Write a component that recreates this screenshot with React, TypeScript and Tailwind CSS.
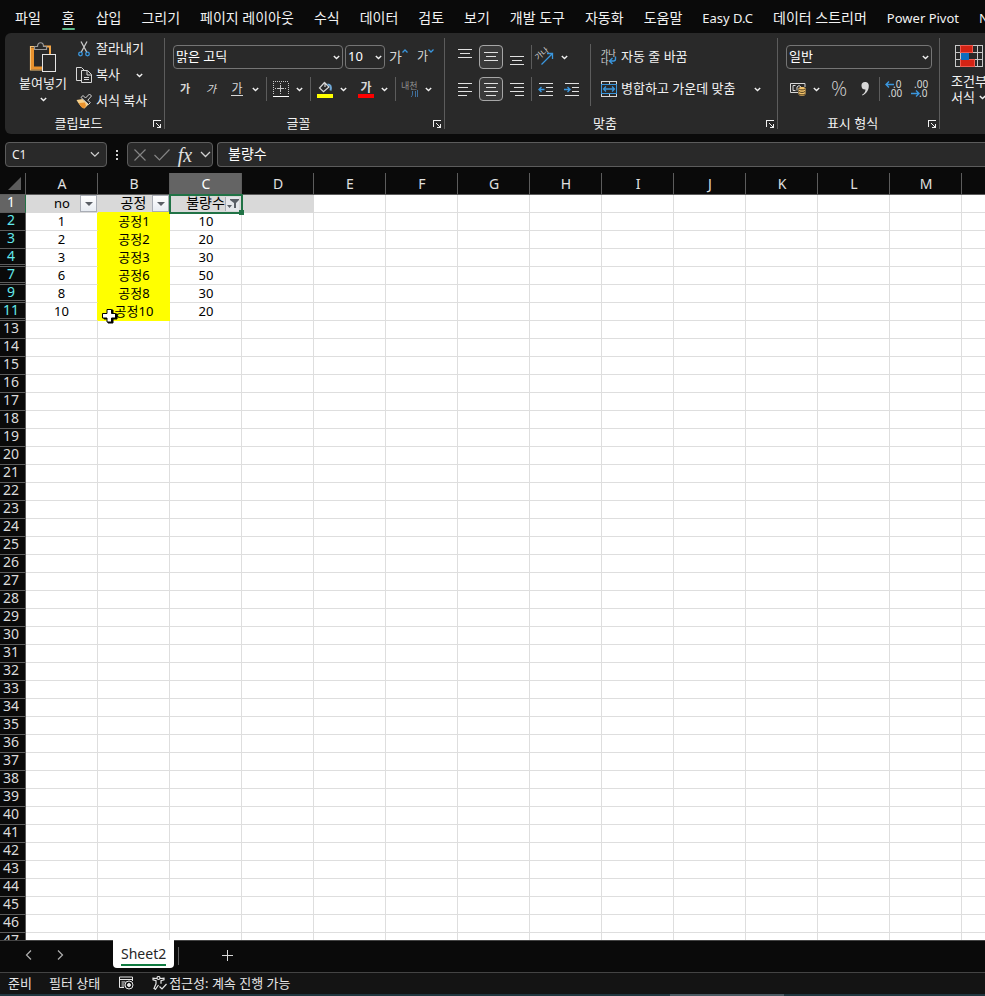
import type { ReactNode } from "react";

const tabs = [
  "파일", "홈", "삽입", "그리기", "페이지 레이아웃", "수식", "데이터", "검토", "보기",
  "개발 도구", "자동화", "도움말", "Easy D.C", "데이터 스트리머", "Power Pivot", "N",
];

const columns = ["A", "B", "C", "D", "E", "F", "G", "H", "I", "J", "K", "L", "M", "N"];

const records: { row: number; no: string; process: string; defects: string }[] = [
  { row: 2, no: "1", process: "공정1", defects: "10" },
  { row: 3, no: "2", process: "공정2", defects: "20" },
  { row: 4, no: "3", process: "공정3", defects: "30" },
  { row: 7, no: "6", process: "공정6", defects: "50" },
  { row: 9, no: "8", process: "공정8", defects: "30" },
  { row: 11, no: "10", process: "공정10", defects: "20" },
];

const emptyRows = Array.from({ length: 35 }, (_, i) => i + 13);

function Chevron({ wide = false }: { wide?: boolean }) {
  return wide ? (
    <svg width="11" height="7" viewBox="0 0 11 7" fill="none" stroke="#d0d0d0" strokeWidth="1.3">
      <path d="M1 1l4.5 4.5L10 1" />
    </svg>
  ) : (
    <svg width="7" height="5" viewBox="0 0 7 5" fill="none" stroke="#f0f0f0" strokeWidth="1.4">
      <path d="M.8 1l2.7 2.5L6.2 1" />
    </svg>
  );
}

function IconButton({ label, boxed = false, children }: { label: string; boxed?: boolean; children: ReactNode }) {
  return (
    <button
      type="button"
      aria-label={label}
      className={
        boxed
          ? "flex size-6 shrink-0 items-center justify-center rounded border border-[#a6a6a6] bg-[#3a3a3a]"
          : "flex size-6 shrink-0 items-center justify-center"
      }
    >
      {children}
    </button>
  );
}

function More({ label }: { label: string }) {
  return (
    <button type="button" aria-label={label} className="flex h-6 w-3 shrink-0 items-center justify-center">
      <Chevron />
    </button>
  );
}

function Split({ label, children }: { label: string; children: ReactNode }) {
  return (
    <div className="flex">
      <IconButton label={label}>{children}</IconButton>
      <More label={label + " 옵션"} />
    </div>
  );
}

function Divider() {
  return <div className="h-6 w-px shrink-0 bg-[#5c5c5c]" />;
}

function Launcher({ label }: { label: string }) {
  return (
    <button type="button" aria-label={label} className="self-end">
      <svg width="10" height="10" viewBox="0 0 10 10" fill="none" stroke="#f0f0f0" shapeRendering="crispEdges">
        <path d="M1.5 8V1.5H9" />
        <path d="M4 4l4 4" shapeRendering="auto" />
        <path d="M8.5 4.5v4h-4" />
      </svg>
    </button>
  );
}

function Group({ title, width, children }: { title: string; width: string; children: ReactNode }) {
  return (
    <section className={"flex shrink-0 flex-col border-r border-[#5c5c5c] " + width}>
      <div className="min-h-0 flex-1">{children}</div>
      <div className="flex h-4 items-start pr-0.5">
        <h2 className="flex-1 text-center leading-5">{title}</h2>
        <Launcher label={title + " 설정"} />
      </div>
    </section>
  );
}

function Dropdown({ label, value, width, inset }: { label: string; value: string; width: string; inset: string }) {
  return (
    <div className={"grid h-6 shrink-0 items-center " + width}>
      <select
        aria-label={label}
        className={
          "h-6 w-full appearance-none rounded border border-[#757575] bg-[#292929] text-white [grid-area:1/1] " + inset
        }
      >
        <option>{value}</option>
      </select>
      <span className="pointer-events-none mr-[3px] justify-self-end [grid-area:1/1]">
        <Chevron />
      </span>
    </div>
  );
}

function Lines({ d }: { d: string }) {
  return (
    <svg width="16" height="16" viewBox="0 0 16 16" fill="none" stroke="#e0e0e0" shapeRendering="crispEdges">
      <path d={d} />
    </svg>
  );
}

function Indent({ right = false }: { right?: boolean }) {
  return (
    <svg width="16" height="16" viewBox="0 0 16 16" fill="none" stroke="#e0e0e0">
      <path d="M1 2.5h14M8 6.5h7M8 10.5h7M1 14.5h14" shapeRendering="crispEdges" />
      {right ? (
        <path d="M0 8.5h6M3.5 6l2.5 2.5L3.5 11" stroke="#3a96dd" strokeWidth="1.4" />
      ) : (
        <path d="M6.5 8.5H1M3.5 6L1 8.5 3.5 11" stroke="#3a96dd" strokeWidth="1.4" />
      )}
    </svg>
  );
}

function Decimals({ more = false }: { more?: boolean }) {
  return (
    <svg width="18" height="18" viewBox="0 0 18 18" fill="none" className="overflow-visible text-[10px]">
      {more ? (
        <>
          <text x="3" y="8" fill="#d8d8d8">.00</text>
          <text x="8" y="17" fill="#d8d8d8">.0</text>
          <path d="M0 13.5h8M5 10.5l3 3-3 3" stroke="#3a96dd" strokeWidth="1.4" />
        </>
      ) : (
        <>
          <text x="8" y="8" fill="#d8d8d8">.0</text>
          <text x="3" y="17" fill="#d8d8d8">.00</text>
          <path d="M9 4.5H1M4 1.5l-3 3 3 3" stroke="#3a96dd" strokeWidth="1.4" />
        </>
      )}
    </svg>
  );
}

function PasteIcon() {
  return (
    <svg width="28" height="31" viewBox="0 0 28 31" fill="none">
      <path d="M7 4.5H1.5V28H13" stroke="#f8c476" strokeWidth="1.2" />
      <path d="M3.5 5.5v20.5h9.5" stroke="#e8912d" strokeWidth="3" />
      <path d="M14 4.5h7V12" stroke="#f3a648" strokeWidth="2" />
      <path d="M5.5 7.5v-3h3c0-5 6-5 6 0h3v3z" fill="#292929" stroke="#9a9a9a" strokeWidth="1.2" />
      <path d="M13.5 12.5h13v17h-13z" fill="#292929" stroke="#e6e6e6" shapeRendering="crispEdges" />
    </svg>
  );
}

function CutIcon() {
  return (
    <svg width="16" height="16" viewBox="0 0 16 16" fill="none" strokeWidth="1.3">
      <path d="M5 .5l5.7 10.5M11 .5L5.3 11" stroke="#c8c8c8" />
      <circle cx="4.5" cy="13" r="1.8" stroke="#3a96dd" />
      <circle cx="11.5" cy="13" r="1.8" stroke="#3a96dd" />
    </svg>
  );
}

function CopyIcon() {
  return (
    <svg width="16" height="16" viewBox="0 0 16 16" fill="none" stroke="#d8d8d8">
      <path d="M5 13.5H.5V.5h5l2.5 2.5" />
      <path d="M5.5 3.5h6l4 4v8h-10z" fill="#292929" />
      <path d="M11 3.5v4.5h4.5M8 10.5h5M8 12.5h5" />
    </svg>
  );
}

function BrushIcon() {
  return (
    <svg width="16" height="16" viewBox="0 0 16 16" fill="none">
      <path d="M.5 7l6-1 6 5.5-4 4q-4-1-8-8.5z" fill="#f6d08a" />
      <path d="M3 10l6-.5 1 3.5-2 2.5q-3-.5-5-5.5z" fill="#e8912d" />
      <path d="M5 4.5l7.5 7 1.8-1.8-2.5-2.5L15.5 3 13.5 1 9.5 5 7 2.5z" fill="#292929" stroke="#d8d8d8" />
    </svg>
  );
}

function BorderIcon() {
  return (
    <svg width="16" height="16" viewBox="0 0 16 16" fill="none" stroke="#c8c8c8" shapeRendering="crispEdges">
      <path d="M0 .5h16M.5 2v12M15.5 2v12M7.5 2v3M7.5 10v4M2 7.5h3M10 7.5h4" strokeDasharray="1 1" />
      <path d="M5 7.5h5M7.5 5v5" />
      <path d="M0 15.5h16" stroke="#fff" />
    </svg>
  );
}

function FillIcon() {
  return (
    <svg width="16" height="17" viewBox="0 0 16 17" fill="none">
      <path d="M7.5 1.5L2.5 7l4 3.8L12 6 8 2v4" stroke="#d8d8d8" strokeWidth="1.2" />
      <path d="M10.5 3.5c3 0 4 2 3 6" stroke="#6fa8d6" strokeWidth="2" />
      <path d="M0 13h16v4H0z" fill="#ff0" />
    </svg>
  );
}

function OrientationIcon() {
  return (
    <svg width="18" height="18" viewBox="0 0 18 18" fill="none" className="overflow-visible text-[8px]">
      <text x="-1" y="9" fill="#d8d8d8" transform="rotate(-40 5 8)">가나</text>
      <path d="M4.5 16.5L15 6M10 5.5H15.5V11" stroke="#3a96dd" strokeWidth="1.3" />
    </svg>
  );
}

function WrapIcon() {
  return (
    <svg width="16" height="16" viewBox="0 0 16 16" fill="none" className="overflow-visible text-[8px]">
      <text x="0" y="7" fill="#e0e0e0">가나</text>
      <text x="0" y="15" fill="#e0e0e0">다</text>
      <path d="M14.5 7.5v2.500q0 2-2 2H9M11.5 9L8.5 12l3 3" stroke="#3a96dd" strokeWidth="1.4" />
    </svg>
  );
}

function MergeIcon() {
  return (
    <svg width="16" height="16" viewBox="0 0 16 16" fill="none">
      <path d="M.5.5h15v15H.5zM8 .5V4M8 12v3.5" stroke="#d8d8d8" shapeRendering="crispEdges" />
      <path d="M.5 3.5h15v9H.5z" fill="#292929" stroke="#3a96dd" shapeRendering="crispEdges" />
      <path d="M3 8h10M5 5.5L2.5 8 5 10.5M11 5.5L13.5 8 11 10.5" stroke="#3a96dd" strokeWidth="1.3" />
    </svg>
  );
}

function CurrencyIcon() {
  return (
    <svg width="17" height="16" viewBox="0 0 17 16" fill="none">
      <path d="M8 11.5H.5v-9h14.5V6" stroke="#d8d8d8" />
      <path d="M5.5 4.5H3v5h2.5M7 9.5V6q2-3 4 0" stroke="#d8d8d8" />
      <path d="M8.5 7.5v5.5c0 2.5 7 2.5 7 0V7.5c0-2-7-2-7 0z" fill="#f3c26b" />
      <path d="M9 8c1 1.2 5 1.2 6 0M9 10.5c1 1.2 5 1.2 6 0M9 13c1 1.2 5 1.2 6 0" stroke="#4a3a1c" />
    </svg>
  );
}

function ConditionalIcon() {
  return (
    <svg width="28" height="22" viewBox="0 0 28 22" fill="none" shapeRendering="crispEdges">
      <path d="M.5.5h27v21H.5zM.5 7.5h27M.5 14.5h27M5.5 0v22M22.5 0v22" stroke="#c8c8c8" />
      <path d="M5.5.5h12v7h-12zM5.5 14.5h14v7h-14z" fill="#d42314" stroke="#f05a50" />
      <path d="M5.5 8h8v6.5h-8z" fill="#0f6cbd" />
    </svg>
  );
}

function FilterButton({ label }: { label: string }) {
  return (
    <button
      type="button"
      aria-label={label}
      className="absolute top-0 right-0 flex size-[17px] items-center justify-center border border-[#a9adb5] bg-linear-to-b from-white to-[#e8ecf2]"
    >
      <svg width="8" height="4" viewBox="0 0 8 4">
        <path d="M0 0h8L4 4z" fill="#5a5f66" />
      </svg>
    </button>
  );
}

function Ribbon() {
  return (
    <div className="ml-[5px] flex h-[101px] shrink-0 overflow-hidden rounded-l-md bg-[#292929] py-[5px] text-[13px] text-[#f2f2f2]">
      <Group title="클립보드" width="w-[160px]">
        <div className="flex pl-3">
          <button type="button" className="flex w-[52px] flex-col items-center pt-1">
            <PasteIcon />
            <span className="leading-5 whitespace-nowrap">붙여넣기</span>
            <span className="mt-1">
              <Chevron />
            </span>
          </button>
          <div className="-mt-0.5 ml-[7px] flex flex-col">
            <button type="button" className="flex h-[26px] items-center gap-1">
              <CutIcon />
              잘라내기
            </button>
            <div className="flex h-[26px] items-center">
              <button type="button" className="flex items-center gap-1">
                <CopyIcon />
                복사
              </button>
              <button type="button" aria-label="복사 옵션" className="ml-3 p-1">
                <Chevron />
              </button>
            </div>
            <button type="button" className="flex h-[26px] items-center gap-1">
              <BrushIcon />
              서식 복사
            </button>
          </div>
        </div>
      </Group>

      <Group title="글꼴" width="w-[280px]">
        <div className="flex flex-col gap-2 pt-[7px] pl-2">
          <div className="flex items-center">
            <Dropdown label="글꼴 이름" value="맑은 고딕" width="w-[170px]" inset="pl-0.5" />
            <div className="ml-0.5 flex">
              <Dropdown label="글꼴 크기" value="10" width="w-10" inset="pl-0.5" />
            </div>
            <button type="button" aria-label="글꼴 크기 크게" className="ml-1 flex h-6 w-[18px] text-[#d8d8d8]">
              <span className="text-[14px] leading-6">가</span>
              <svg width="6" height="4" viewBox="0 0 6 4" fill="none" stroke="#3a96dd" strokeWidth="1.3" className="mt-1 shrink-0">
                <path d="M.5 3.5L3 1l2.5 2.5" />
              </svg>
            </button>
            <button type="button" aria-label="글꼴 크기 작게" className="ml-2.5 flex h-6 w-[18px] text-[#d8d8d8]">
              <span className="text-[12px] leading-6">가</span>
              <svg width="6" height="4" viewBox="0 0 6 4" fill="none" stroke="#3a96dd" strokeWidth="1.3" className="mt-1 shrink-0">
                <path d="M.5.5L3 3 5.5.5" />
              </svg>
            </button>
          </div>
          <div className="flex items-center text-[12px] text-[#d8d8d8]">
            <div className="flex gap-0.5">
              <IconButton label="굵게">
                <span className="text-[11px] font-bold">가</span>
              </IconButton>
              <IconButton label="기울임꼴">
                <span className="text-[11px] italic">가</span>
              </IconButton>
              <Split label="밑줄">
                <span className="border-b border-[#d8d8d8] leading-[13px]">가</span>
              </Split>
            </div>
            <div className="mr-0.5 ml-[5px]"><Divider /></div>
            <Split label="테두리"><BorderIcon /></Split>
            <div className="mr-0.5 ml-[5px]"><Divider /></div>
            <Split label="채우기 색"><FillIcon /></Split>
            <div className="ml-[5px]">
              <Split label="글꼴 색">
                <span className="w-4 border-b-4 border-[#ff0000] text-center leading-[13px] font-bold">가</span>
              </Split>
            </div>
            <div className="mr-0.5 ml-[5px]"><Divider /></div>
            <Split label="윗주 필드">
              <svg width="18" height="18" viewBox="0 0 18 18" fill="none" className="overflow-visible text-[9px]">
                <text x="0" y="9" fill="#8f8f8f">내천</text>
                <path d="M11.5 11v3q0 2-1.5 3M14.5 11v6M16.5 10v7" stroke="#3f6f9c" />
              </svg>
            </Split>
          </div>
        </div>
      </Group>

      <Group title="맞춤" width="w-[333px]">
        <div className="flex pl-2">
          <div className="flex w-[137px] flex-col gap-2 pt-[7px]">
            <div className="flex gap-0.5">
              <IconButton label="위쪽 맞춤"><Lines d="M1 .5h14M3 4.5h10M1 8.5h14" /></IconButton>
              <IconButton label="가운데 맞춤" boxed><Lines d="M1 3.5h14M3 7.5h10M1 11.5h14" /></IconButton>
              <IconButton label="아래쪽 맞춤"><Lines d="M1 7.5h14M3 11.5h10M1 15.5h14" /></IconButton>
              <Divider />
              <Split label="방향"><OrientationIcon /></Split>
            </div>
            <div className="flex gap-0.5">
              <IconButton label="왼쪽 맞춤"><Lines d="M1 2.5h14M1 6.5h10M1 10.5h14M1 14.5h9" /></IconButton>
              <IconButton label="가운데" boxed><Lines d="M1 2.5h14M3 6.5h10M1 10.5h14M3 14.5h10" /></IconButton>
              <IconButton label="오른쪽 맞춤"><Lines d="M1 2.5h14M5 6.5h10M1 10.5h14M6 14.5h9" /></IconButton>
              <Divider />
              <IconButton label="내어쓰기"><Indent /></IconButton>
              <IconButton label="들여쓰기"><Indent right /></IconButton>
            </div>
          </div>
          <div className="mt-1.5 flex h-[62px] flex-col gap-2 border-l border-[#5c5c5c] pt-px pl-2.5">
            <button type="button" className="flex h-6 items-center gap-1">
              <WrapIcon />
              자동 줄 바꿈
            </button>
            <div className="flex items-center">
              <button type="button" className="flex h-6 items-center gap-1">
                <MergeIcon />
                병합하고 가운데 맞춤
              </button>
              <div className="ml-4"><More label="병합 옵션" /></div>
            </div>
          </div>
        </div>
      </Group>

      <Group title="표시 형식" width="w-[162px]">
        <div className="flex flex-col gap-2 pt-[7px] pl-2">
          <Dropdown label="표시 형식" value="일반" width="w-[146px]" inset="pl-0.5" />
          <div className="flex items-center">
            <Split label="회계 표시 형식"><CurrencyIcon /></Split>
            <div className="ml-[5px] flex gap-0.5">
              <IconButton label="백분율 스타일">
                <span className="font-['Open_Sans','Noto_Sans',sans-serif] text-[20px] leading-6 font-light text-[#d0d0d0]">%</span>
              </IconButton>
              <IconButton label="쉼표 스타일">
                <svg width="8" height="14" viewBox="0 0 8 14" fill="#d8d8d8">
                  <path d="M4 0a3.6 3.6 0 0 1 3.8 4c0 4-2.3 7.5-6.3 9.5l-.5-.8c2.3-1.3 3.5-3 3.5-5.2A3.7 3.7 0 1 1 4 0z" />
                </svg>
              </IconButton>
              <Divider />
              <IconButton label="자릿수 늘림"><Decimals /></IconButton>
              <IconButton label="자릿수 줄임"><Decimals more /></IconButton>
            </div>
          </div>
        </div>
      </Group>

      <button type="button" className="ml-[11px] flex shrink-0 flex-col items-start text-left">
        <span className="mt-[7px] mb-1.5 ml-1"><ConditionalIcon /></span>
        <span className="leading-4">조건부</span>
        <span className="flex items-center gap-1 leading-4">
          서식 <Chevron />
        </span>
      </button>
    </div>
  );
}

function FormulaBar() {
  return (
    <div className="flex h-[39px] shrink-0 items-start pt-2 pl-[5px]">
      <div className="flex h-[25px] w-[102px] shrink-0 items-center rounded border border-[#5c5c5c] bg-[#292929] pr-1.5 pl-1.5">
        <input aria-label="이름 상자" defaultValue="C1" className="w-full min-w-0 bg-transparent text-[12px] text-[#f0f0f0] outline-none" />
        <Chevron wide />
      </div>
      <div className="flex h-[25px] w-5 shrink-0 flex-col items-center justify-center gap-0.5">
        <span className="size-0.5 bg-[#d0d0d0]" />
        <span className="size-0.5 bg-[#d0d0d0]" />
        <span className="size-0.5 bg-[#d0d0d0]" />
      </div>
      <div className="flex h-[25px] w-[86px] shrink-0 items-center justify-between rounded border border-[#5c5c5c] bg-[#292929] pr-px pl-1.5">
        <button type="button" aria-label="취소">
          <svg width="12" height="12" viewBox="0 0 12 12" stroke="#858585" strokeWidth="1.2">
            <path d="M.5.5l11 11M11.5.5l-11 11" />
          </svg>
        </button>
        <button type="button" aria-label="입력">
          <svg width="16" height="12" viewBox="0 0 16 12" fill="none" stroke="#858585" strokeWidth="1.2">
            <path d="M.5 6l5 5L15.5.5" />
          </svg>
        </button>
        <button type="button" className="font-['Liberation_Serif',serif] text-[20px] leading-5 text-[#e0e0e0] italic">
          fx
        </button>
        <button type="button" aria-label="함수 옵션"><Chevron wide /></button>
      </div>
      <input
        aria-label="수식 입력줄"
        defaultValue="불량수"
        className="ml-1 h-[25px] min-w-0 flex-1 rounded-l border border-r-0 border-[#5c5c5c] bg-[#292929] pb-1 pl-2.5 text-[14px] text-white outline-none"
      />
    </div>
  );
}

const cell = "relative border-r border-b p-0 text-center font-normal ";
const grid = "border-[#dedede]";
const shade = "border-[#d9d9d9] bg-[#d9d9d9]";

function RowHeader({ row, hiddenBelow = false, filtered = false }: { row: number; hiddenBelow?: boolean; filtered?: boolean }) {
  return (
    <th
      scope="row"
      className={
        "border-r border-b border-[#5c5c5c] bg-[#0a0a0a] p-0 align-top text-[14px] font-normal " +
        (filtered ? "text-[#62e8ec]" : "text-[#dcdcdc]")
      }
    >
      <div className={"h-4 pr-[3px] leading-[14px] " + (hiddenBelow ? "border-b border-[#5c5c5c]" : "")}>{row}</div>
    </th>
  );
}

function Sheet() {
  return (
    <div className="min-h-0 flex-1 overflow-hidden bg-white">
      <table className="w-0 table-fixed border-separate border-spacing-0 text-[13px] leading-[17px] text-black">
        <colgroup>
          <col className="w-[26px]" />
          {columns.map((c) => (
            <col key={c} className="w-[72px]" />
          ))}
        </colgroup>
        <thead>
          <tr className="h-[22px] bg-[#0a0a0a] text-[14px] text-[#e0e0e0]">
            <td className="border-r border-b border-[#5c5c5c] p-0 pr-1 pb-1 align-bottom">
              <svg width="13" height="13" viewBox="0 0 13 13" className="ml-auto">
                <path d="M13 0v13H0z" fill="#5c5c5c" />
              </svg>
            </td>
            {columns.map((c) => (
              <th
                key={c}
                scope="col"
                className={
                  "border-r border-b border-[#5c5c5c] p-0 pl-px font-normal " + (c === "C" ? "bg-[#646464] text-white" : "")
                }
              >
                {c}
              </th>
            ))}
          </tr>
        </thead>
        <tbody>
          <tr className="h-[18px]">
            <th scope="row" className="border-r border-b border-r-[#217346] border-b-[#5c5c5c] bg-[#646464] p-0 align-top text-[14px] font-normal text-white">
              <div className="h-4 pr-[3px] leading-[14px]">1</div>
            </th>
            <td className={cell + "pl-px " + shade}>
              no
              <FilterButton label="no 필터" />
            </td>
            <td className={cell + "border-r-[#d9d9d9] border-b-[#ffff00] bg-[#d9d9d9] align-top text-[14px] leading-[15px]"}>
              공정
              <FilterButton label="공정 필터" />
            </td>
            <td className={cell + "align-top text-[14px] leading-[15px] " + shade}>
              불량수
              <button
                type="button"
                aria-label="불량수 필터"
                className="absolute top-0.5 right-0.5 flex h-3.5 w-3.5 items-center justify-center border-l border-[#a9adb5] bg-[#e4e6ea]"
              >
                <svg width="12" height="10" viewBox="0 0 12 10" fill="#5a5f66">
                  <path d="M3 0h9v1L9 4v5H7V4L3 1zM0 6h5L2.5 9z" />
                </svg>
              </button>
              <div className="pointer-events-none absolute -top-px -right-0.5 -bottom-0.5 -left-px z-10 border-2 border-[#217346]" />
              <div className="absolute -right-[3px] -bottom-[3px] z-10 size-[5px] bg-[#217346]" />
            </td>
            <td className={cell + shade} />
            {columns.slice(4).map((c) => (
              <td key={c} className={cell + grid} />
            ))}
          </tr>
          {records.map((r) => (
            <tr key={r.row} className="h-[18px]">
              <RowHeader row={r.row} hiddenBelow={r.row >= 4} filtered />
              <td className={cell + "border-r-[#ffff00] border-b-[#dedede]"}>{r.no}</td>
              <td className={cell + "border-[#ffff00] bg-[#ffff00] pl-px"}>
                {r.process}
                {r.row === 11 && (
                  <svg width="16" height="16" viewBox="0 0 16 16" className="absolute top-[5px] left-1">
                    <path d="M6 2h5v4h4v5h-4v4H6v-4H2V6h4z" fill="#000" stroke="#000" />
                    <path d="M5 1.5h4.5v4h4V10h-4v4H5v-4H.5V5.5H5z" fill="#fff" stroke="#000" />
                  </svg>
                )}
              </td>
              <td className={cell + "pl-px " + grid}>{r.defects}</td>
              {columns.slice(3).map((c) => (
                <td key={c} className={cell + grid} />
              ))}
            </tr>
          ))}
          {emptyRows.map((row) => (
            <tr key={row} className="h-[18px]">
              <RowHeader row={row} />
              {columns.map((c) => (
                <td key={c} className={cell + grid} />
              ))}
            </tr>
          ))}
        </tbody>
      </table>
    </div>
  );
}

function SheetTabs() {
  return (
    <nav aria-label="시트" className="flex h-8 shrink-0 items-start border-t border-[#444444] bg-[#0a0a0a]">
      <button type="button" aria-label="이전 시트" className="ml-3 flex h-7 w-8 items-center justify-center">
        <svg width="7" height="10" viewBox="0 0 7 10" fill="none" stroke="#b0b0b0" strokeWidth="1.2">
          <path d="M6 .5L1.5 5 6 9.5" />
        </svg>
      </button>
      <button type="button" aria-label="다음 시트" className="flex h-7 w-8 items-center justify-center">
        <svg width="7" height="10" viewBox="0 0 7 10" fill="none" stroke="#b0b0b0" strokeWidth="1.2">
          <path d="M1 .5L5.5 5 1 9.5" />
        </svg>
      </button>
      <button type="button" className="-mt-px ml-[37px] flex h-7 flex-col rounded-b bg-white px-2 pt-1 text-[14px] leading-5 text-[#262626]">
        Sheet2
        <span className="h-0.5 w-full bg-[#107c41]" />
      </button>
      <div className="mt-1.5 ml-1 h-[18px] w-px bg-[#5c5c5c]" />
      <button type="button" aria-label="새 시트" className="ml-8 flex h-7 w-8 items-center justify-center">
        <svg width="11" height="11" viewBox="0 0 11 11" stroke="#d8d8d8" shapeRendering="crispEdges">
          <path d="M5.5 0v11M0 5.5h11" />
        </svg>
      </button>
    </nav>
  );
}

function StatusBar() {
  return (
    <footer className="shrink-0">
      <div className="flex h-[22px] items-center border-t border-[#444444] bg-[#141414] pb-0.5 pl-2 text-[13px] leading-5 text-[#e6e6e6]">
        <span>준비</span>
        <span className="ml-[17px]">필터 상태</span>
        <button type="button" aria-label="매크로 기록" className="ml-[19px]">
          <svg width="15" height="14" viewBox="0 0 15 14" fill="none" stroke="#e6e6e6">
            <path d="M5 11.5H.5V1h13v4M.5 3.5h13M2.5 6h4M2.5 8h3M2.5 10h3" />
            <circle cx="10" cy="9" r="4" />
            <circle cx="10" cy="9" r="1.5" fill="#e6e6e6" />
          </svg>
        </button>
        <button type="button" className="ml-[18px] flex items-center gap-0.5">
          <svg width="15" height="14" viewBox="0 0 15 14" fill="none" stroke="#e6e6e6" strokeWidth="1.2">
            <circle cx="6.5" cy="2" r="1.5" />
            <path d="M5 2.5L1 2.2v1.6l3 1v3L2 12.5l1.5.8L6.5 9M8 2.5l4-.3v1.6l-3 1v3" />
            <path d="M7.5 10.5l2.5 2.5 4.5-5" />
          </svg>
          접근성: 계속 진행 가능
        </button>
      </div>
      <div className="h-0.5 bg-[#20363f] pl-[68%]">
        <div className="h-full w-[114px] bg-[#4b5a63]" />
      </div>
    </footer>
  );
}

export default function App() {
  return (
    <div className="flex h-screen flex-col overflow-hidden bg-[#0a0a0a] font-['Noto_Sans','Noto_Sans_CJK_KR',sans-serif]">
      <nav aria-label="리본 탭" className="flex h-[33px] shrink-0 gap-5 overflow-hidden pl-[15px] whitespace-nowrap text-[#f2f2f2]">
        {tabs.map((tab) => (
          <button
            key={tab}
            type="button"
            className={
              "flex shrink-0 flex-col pt-2 leading-5 " +
              (tab === "홈" ? "px-px " : "") +
              (/^[A-Z]/.test(tab) ? "text-[13px]" : "text-[14px]")
            }
          >
            {tab}
            {tab === "홈" && <span className="h-0.5 w-full rounded-full bg-[#5fb98a]" />}
          </button>
        ))}
      </nav>
      <Ribbon />
      <FormulaBar />
      <Sheet />
      <SheetTabs />
      <StatusBar />
    </div>
  );
}
